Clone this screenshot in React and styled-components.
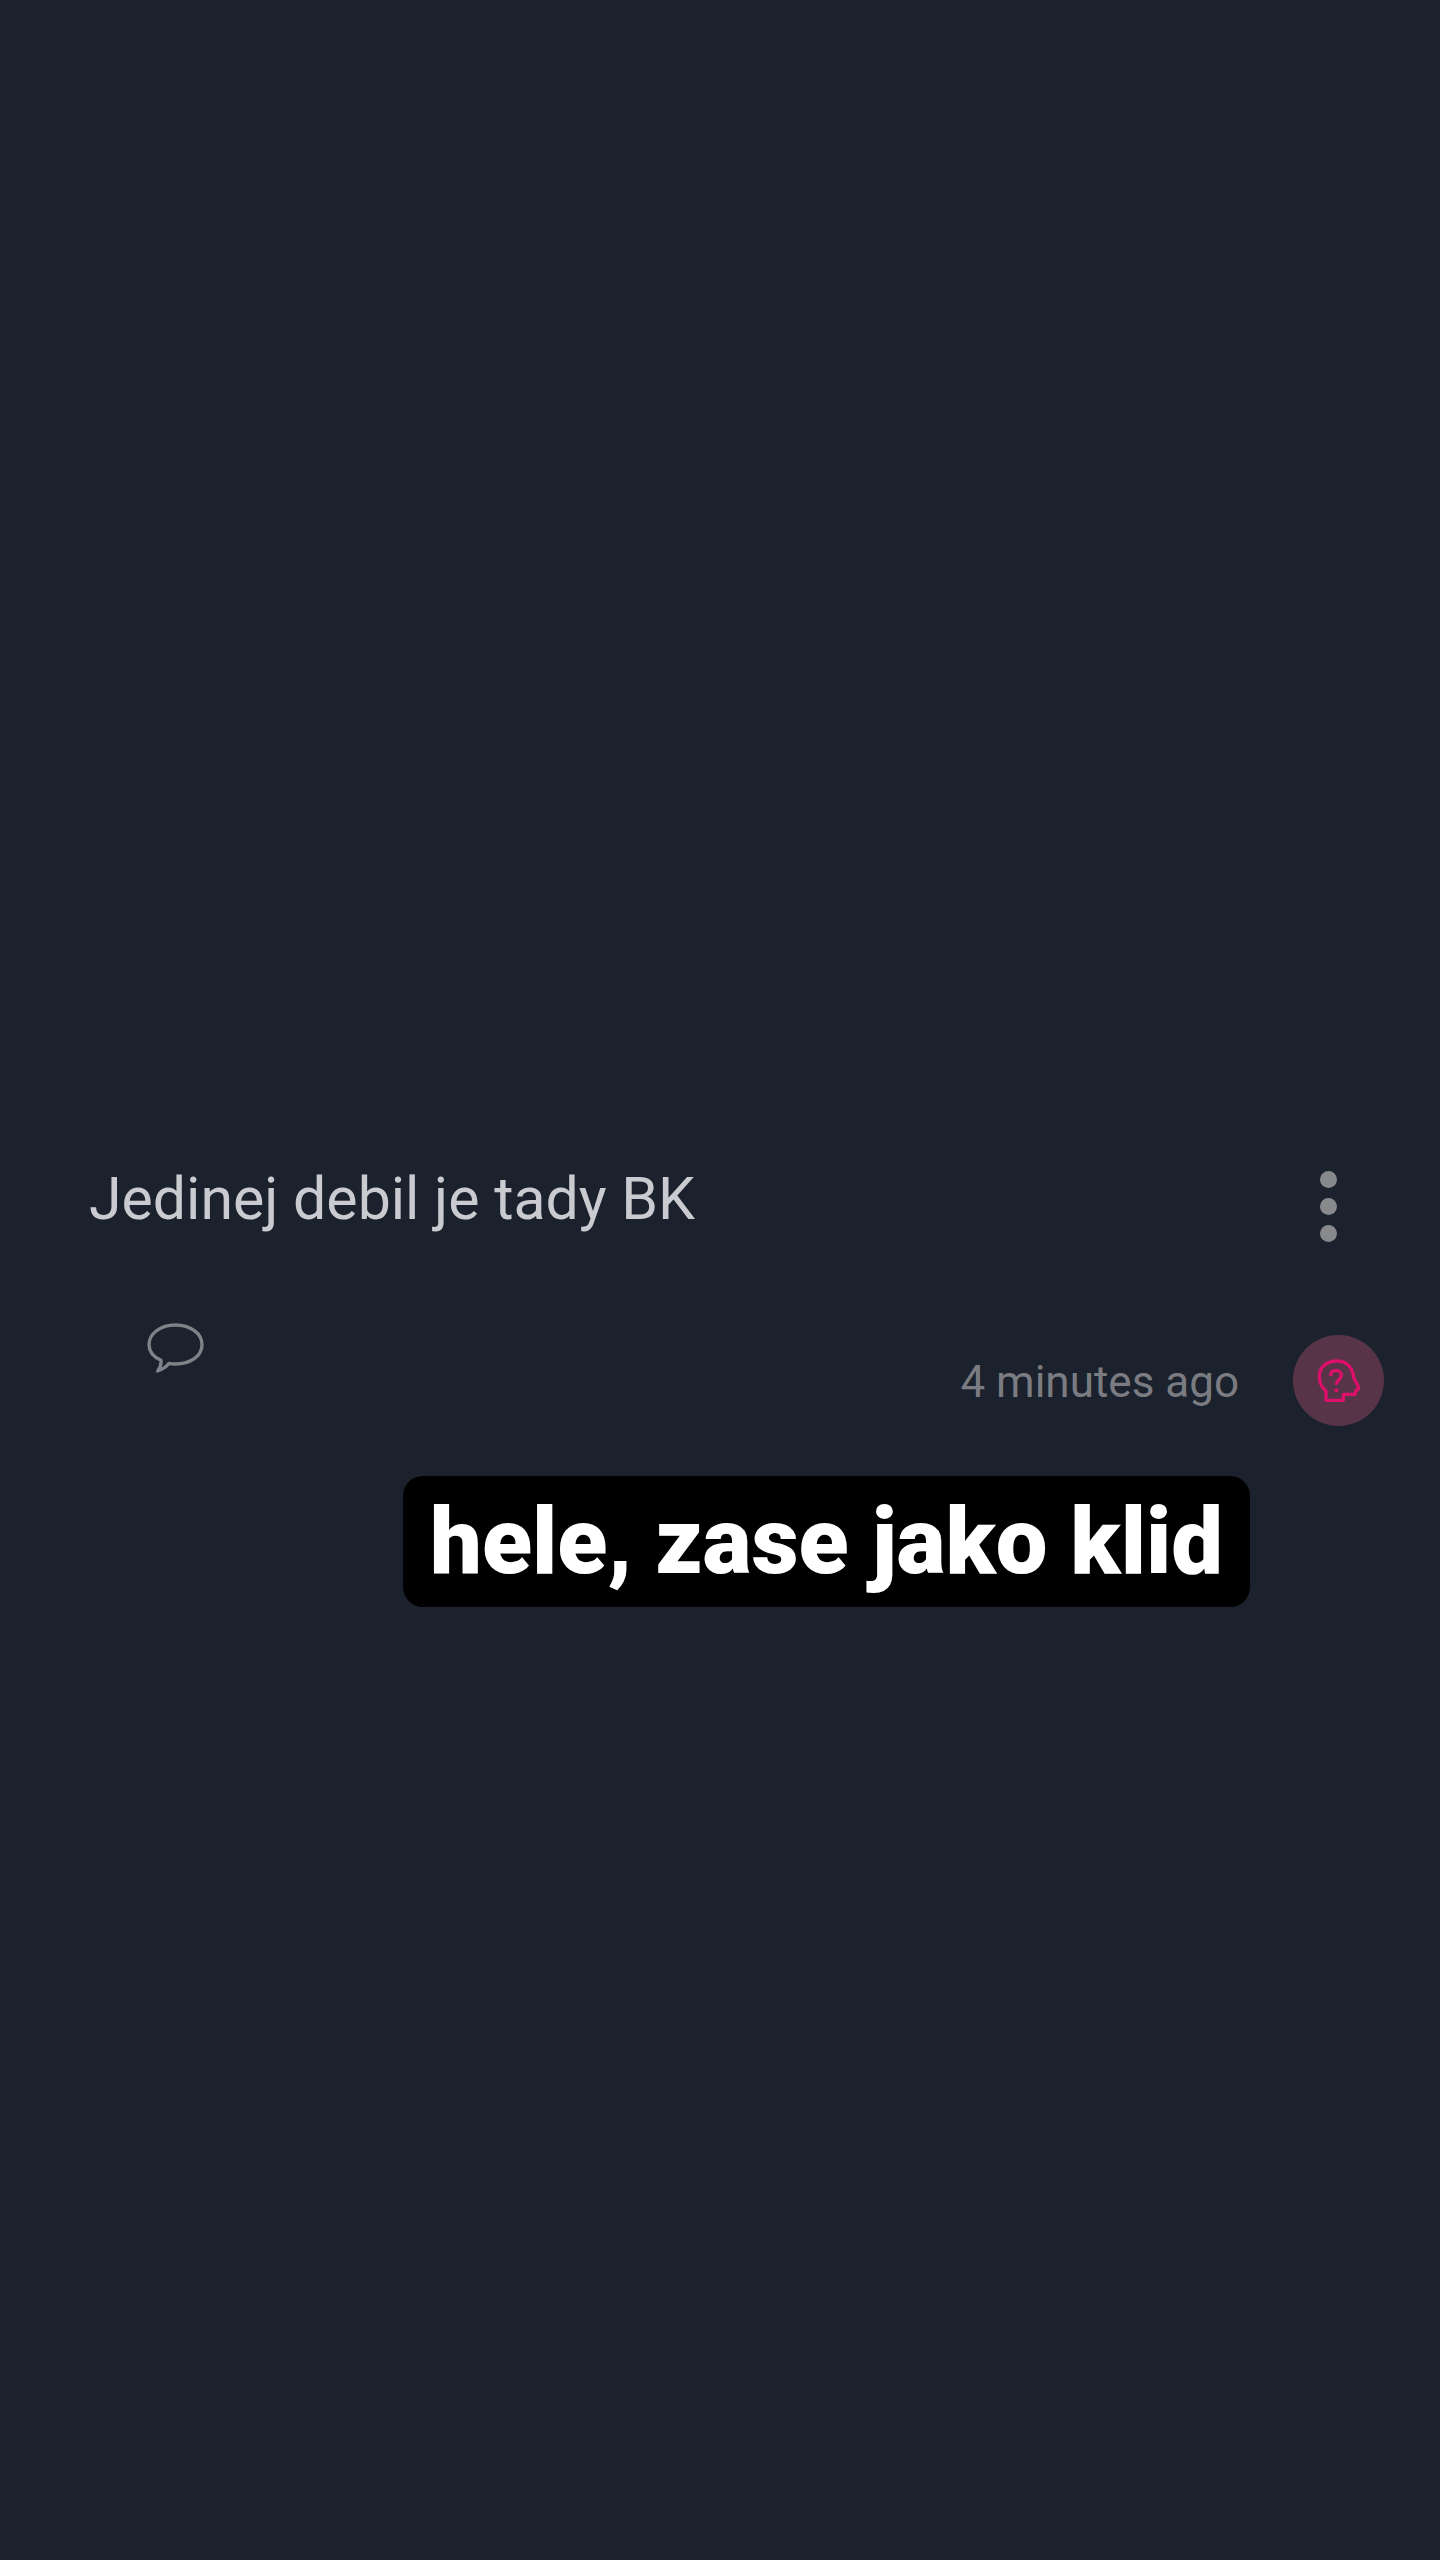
import React from "react";
import styled, { createGlobalStyle } from "styled-components";

const GlobalStyle = createGlobalStyle`
  *, *::before, *::after { box-sizing: border-box; }
  body {
    margin: 0;
    background: #1b222d;
    font-family: Roboto, "Liberation Sans", sans-serif;
  }
`;

const Page = styled.main`
  min-height: 100vh;
  padding: 45vh 56px 80px 89px;
`;

const Post = styled.article`
  display: flex;
  flex-direction: column;
  gap: 77px;
`;

const PostHeader = styled.header`
  display: flex;
  justify-content: space-between;
  align-items: center;
  padding-right: 47px;
`;

const Message = styled.p`
  margin: 0;
  font-size: 59px;
  line-height: 94px;
  color: #c9cbd0;
`;

const IconButton = styled.button`
  display: flex;
  padding: 0;
  border: 0;
  background: none;
  color: ${({ $color }) => $color};
  cursor: pointer;
`;

const MenuButton = styled(IconButton)`
  flex-direction: column;
  gap: 10px;
  padding-top: 15px;
`;

const Dot = styled.span`
  width: 17px;
  height: 17px;
  border-radius: 50%;
  background: currentColor;
`;

const PostFooter = styled.footer`
  display: flex;
  justify-content: space-between;
  align-items: flex-start;
  padding-left: 58px;
`;

const Meta = styled.div`
  display: flex;
  align-items: center;
  gap: 54px;
  padding-top: 12px;
`;

const Time = styled.time`
  padding-top: 2px;
  font-size: 44px;
  line-height: 56px;
  color: #7a7c81;
`;

const CommentIcon = styled.svg`
  display: block;
  width: 57px;
  height: 50px;
`;

const Avatar = styled.svg`
  display: block;
  width: 91px;
  height: 91px;
`;

const CaptionRow = styled.div`
  display: flex;
  justify-content: flex-end;
  padding: 50px 134px 0 0;
`;

const Caption = styled.p`
  margin: 0;
  padding: 10px 27px 9px;
  border-radius: 20px;
  background: #000;
  color: #fff;
  font-size: 92px;
  font-weight: 900;
  line-height: 112px;
`;

export default function App() {
  return (
    <>
      <GlobalStyle />
      <Page>
        <Post>
          <PostHeader>
            <Message>Jedinej debil je tady BK</Message>
            <MenuButton type="button" aria-label="More options" $color="#87898b">
              <Dot />
              <Dot />
              <Dot />
            </MenuButton>
          </PostHeader>
          <PostFooter>
            <IconButton type="button" aria-label="Comment" $color="#7f8288">
              <CommentIcon viewBox="50 70 171 150" aria-hidden="true">
                <path
                  d="M92 182C69 171 56 155 56 135C56 102 90 76 135 76C181 76 215 102 215 135C215 169 180 193 135 193C128 193 121 193 116 191Q104 207 82 214Q94 198 92 182Z"
                  fill="none"
                  stroke="currentColor"
                  strokeWidth="10"
                  strokeLinejoin="round"
                />
              </CommentIcon>
            </IconButton>
            <Meta>
              <Time>4 minutes ago</Time>
              <Avatar viewBox="39 43 273 273" role="img" aria-label="Anonymous">
                <circle cx="175.500" cy="179.500" r="136.500" fill="#583448" />
                <g fill="none" stroke="#dc0f6a" strokeWidth="10" strokeLinejoin="round">
                  <path d="M138 239V211C125 201 118 184 118 166C118 139 141 121 171 121C201 121 218 142 221 171L235 198Q238 206 229 208L225 221H190V239Z" />
                  <path d="M152 166C150 143 184 145 184 164C184 178 169 177 169 192" />
                </g>
                <circle cx="169" cy="209" r="6" fill="#dc0f6a" />
              </Avatar>
            </Meta>
          </PostFooter>
        </Post>
        <CaptionRow>
          <Caption>hele, zase jako klid</Caption>
        </CaptionRow>
      </Page>
    </>
  );
}
